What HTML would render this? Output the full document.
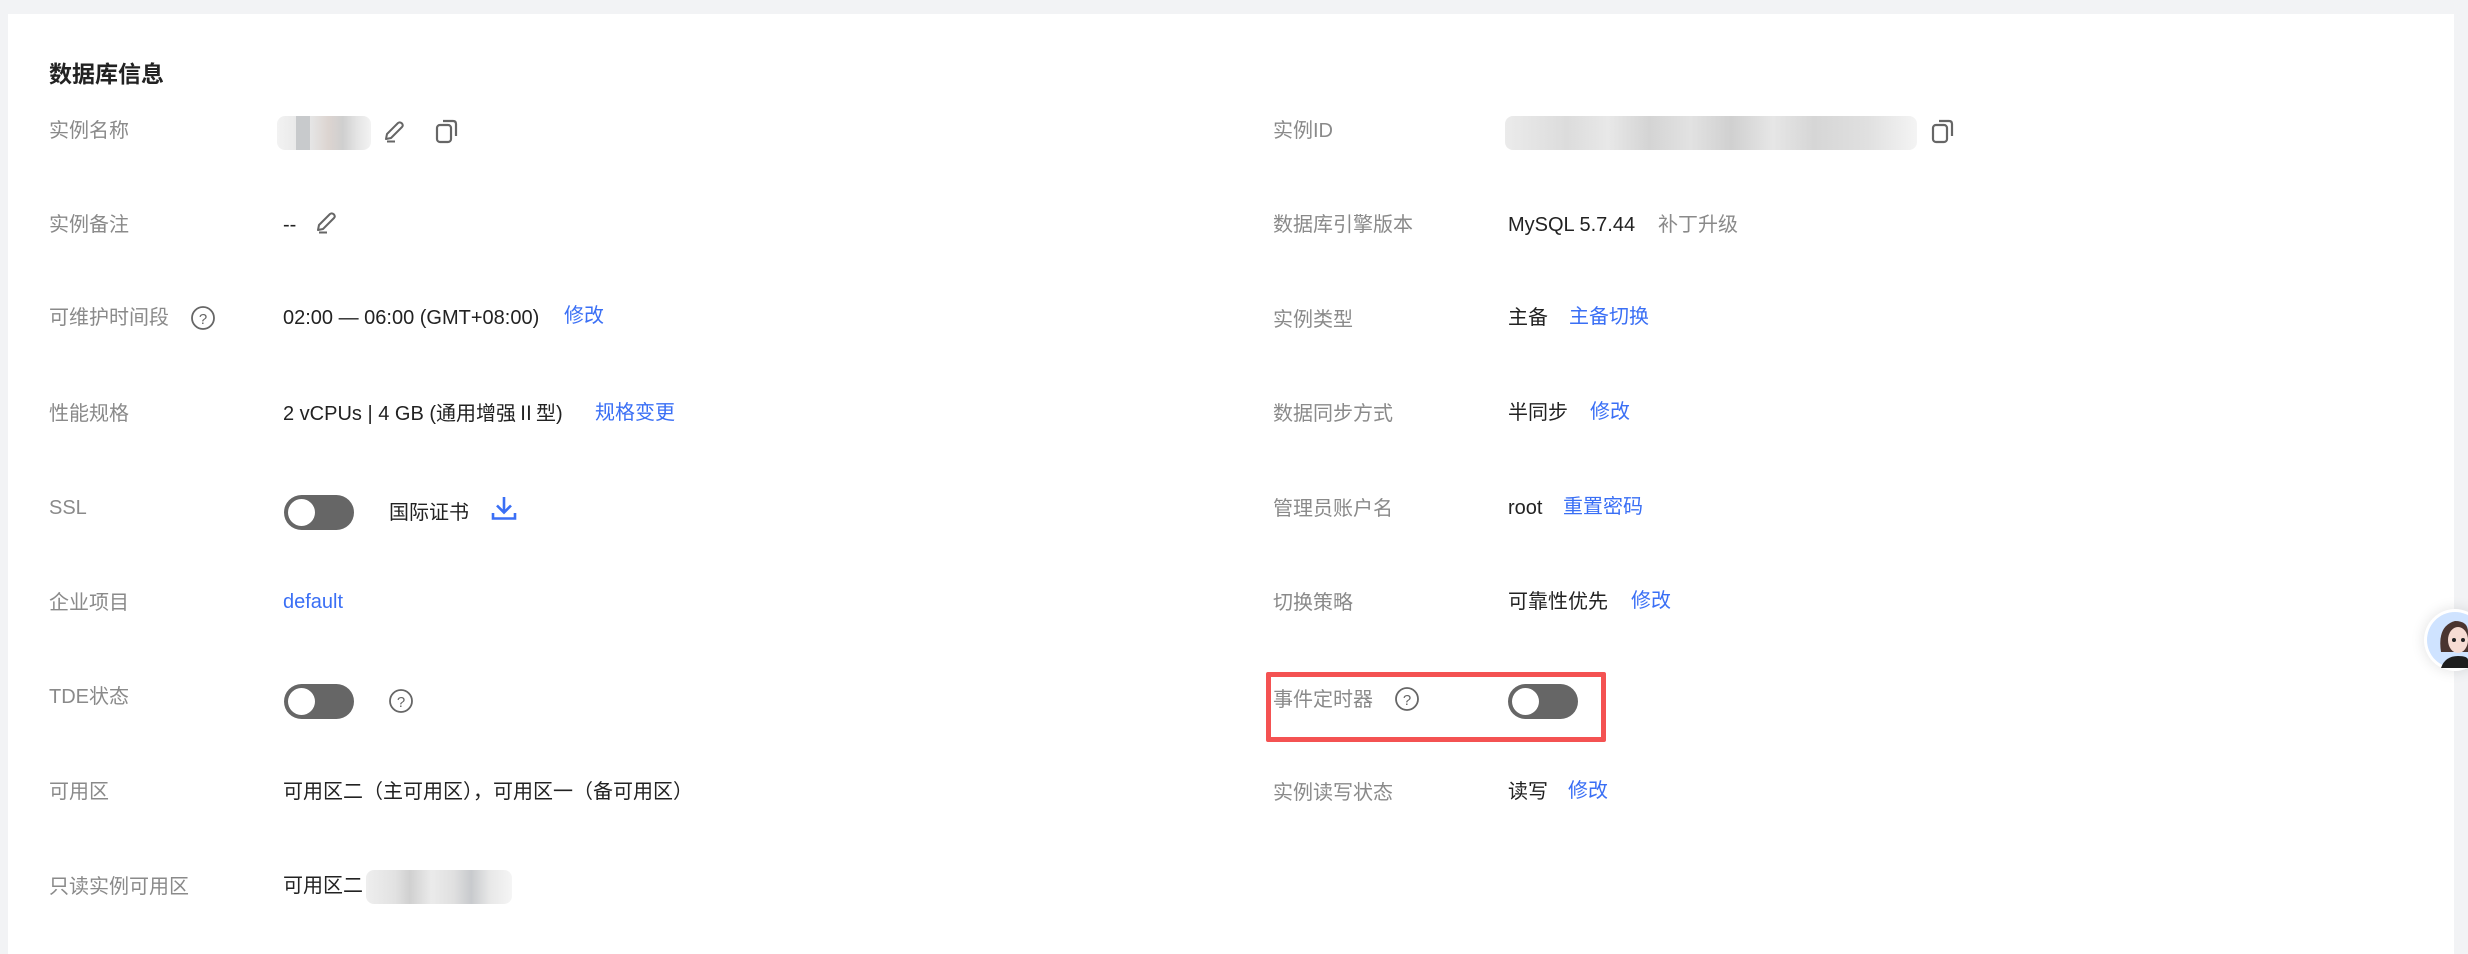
<!DOCTYPE html>
<html><head><meta charset="utf-8">
<style>
html,body{margin:0;padding:0;width:2468px;height:935px;overflow:hidden;background:#f2f3f5;font-family:"Liberation Sans","Noto Sans CJK SC",sans-serif;}
.card{position:absolute;left:8px;top:14px;width:2446px;height:940px;background:#fff;}
.t{position:absolute;white-space:nowrap;font-size:20px;line-height:30px;}
.lab{color:#8a8a8a;}
.val{color:#222;}
.lnk{color:#3a6ff5;}
.grey{color:#8a8a8a;}
.h{position:absolute;left:49px;top:58px;font-size:23px;font-weight:bold;color:#222;line-height:32px;}
.tog{position:absolute;width:70px;height:35px;border-radius:18px;background:#666;}
.tog::after{content:"";position:absolute;left:4px;top:4px;width:27px;height:27px;border-radius:50%;background:#fff;}
.blur{position:absolute;border-radius:8px;}
svg{position:absolute;}
</style></head><body>
<div class="card"></div>
<div class="h">数据库信息</div>

<!-- left column -->
<div class="t lab" style="left:49px;top:116px">实例名称</div>
<div class="blur" style="left:277px;top:116px;width:94px;height:34px;background:linear-gradient(90deg,#f2f2f2 0,#eaeaea 20%,#c8cacc 20%,#c8cacc 35%,#e6e6e6 35%,#dcd4d0 55%,#cfcfcf 70%,#e4e4e4 85%,#f3f3f3 100%);"></div>
<svg style="left:381px;top:119px" width="26" height="26" viewBox="0 0 26 26"><path d="M5 20 L6 15 L17 4 Q19 2.5 21 4.5 Q22.5 6.5 21 8 L10 19 Z M6 22.5 H14" fill="none" stroke="#666" stroke-width="2" stroke-linejoin="round"/></svg>
<svg style="left:434px;top:117px" width="26" height="28" viewBox="0 0 26 28"><rect x="3" y="8" width="14" height="17" rx="3" fill="none" stroke="#666" stroke-width="2.2"/><path d="M9 4 H19 Q22 4 22 7 V19" fill="none" stroke="#666" stroke-width="2.2"/></svg>

<div class="t lab" style="left:49px;top:210px">实例备注</div>
<div class="t val" style="left:283px;top:210px">--</div>
<svg style="left:313px;top:210px" width="26" height="26" viewBox="0 0 26 26"><path d="M5 20 L6 15 L17 4 Q19 2.5 21 4.5 Q22.5 6.5 21 8 L10 19 Z M6 22.5 H14" fill="none" stroke="#666" stroke-width="2" stroke-linejoin="round"/></svg>

<div class="t lab" style="left:49px;top:303px">可维护时间段</div>
<svg style="left:190px;top:305px" width="26" height="26" viewBox="0 0 26 26"><circle cx="13" cy="13" r="11" fill="none" stroke="#666" stroke-width="1.8"/><text x="13" y="19" font-size="15" text-anchor="middle" fill="#666" font-family="Liberation Sans">?</text></svg>
<div class="t val" style="left:283px;top:303px">02:00 — 06:00 (GMT+08:00)</div>
<div class="t lnk" style="left:564px;top:301px">修改</div>

<div class="t lab" style="left:49px;top:399px">性能规格</div>
<div class="t val" style="left:283px;top:399px">2 vCPUs | 4 GB (通用增强Ⅱ型)</div>
<div class="t lnk" style="left:595px;top:398px">规格变更</div>

<div class="t lab" style="left:49px;top:493px">SSL</div>
<div class="tog" style="left:284px;top:495px"></div>
<div class="t val" style="left:389px;top:498px">国际证书</div>
<svg style="left:490px;top:494px" width="28" height="28" viewBox="0 0 28 28"><path d="M14 3 V18 M7 11.5 L14 18.5 L21 11.5 M3 19 V24.5 H25 V19" fill="none" stroke="#3a6ff5" stroke-width="2.6"/></svg>

<div class="t lab" style="left:49px;top:588px">企业项目</div>
<div class="t lnk" style="left:283px;top:587px">default</div>

<div class="t lab" style="left:49px;top:682px">TDE状态</div>
<div class="tog" style="left:284px;top:684px"></div>
<svg style="left:388px;top:688px" width="26" height="26" viewBox="0 0 26 26"><circle cx="13" cy="13" r="11" fill="none" stroke="#666" stroke-width="1.8"/><text x="13" y="19" font-size="15" text-anchor="middle" fill="#666" font-family="Liberation Sans">?</text></svg>

<div class="t lab" style="left:49px;top:777px">可用区</div>
<div class="t val" style="left:283px;top:777px">可用区二（主可用区），可用区一（备可用区）</div>

<div class="t lab" style="left:49px;top:872px">只读实例可用区</div>
<div class="t val" style="left:283px;top:871px">可用区二</div>
<div class="blur" style="left:366px;top:870px;width:146px;height:34px;background:linear-gradient(90deg,#eee 0,#e2e2e2 20%,#d0d0d0 30%,#ebebeb 45%,#e0e0e0 60%,#c8cacd 72%,#e8e8e8 85%,#f5f5f5 100%);"></div>

<!-- right column -->
<div class="t lab" style="left:1273px;top:116px">实例ID</div>
<div class="blur" style="left:1505px;top:116px;width:412px;height:34px;background:linear-gradient(90deg,#ebebeb,#dcdcdc 15%,#e8e8e8 25%,#d4d4d4 35%,#e2e2e2 45%,#d0d0d0 55%,#e6e6e6 65%,#d6d6d6 75%,#e0e0e0 88%,#f4f4f4 100%);"></div>
<svg style="left:1930px;top:117px" width="26" height="28" viewBox="0 0 26 28"><rect x="3" y="8" width="14" height="17" rx="3" fill="none" stroke="#666" stroke-width="2.2"/><path d="M9 4 H19 Q22 4 22 7 V19" fill="none" stroke="#666" stroke-width="2.2"/></svg>

<div class="t lab" style="left:1273px;top:210px">数据库引擎版本</div>
<div class="t val" style="left:1508px;top:210px">MySQL 5.7.44</div>
<div class="t grey" style="left:1658px;top:210px">补丁升级</div>

<div class="t lab" style="left:1273px;top:305px">实例类型</div>
<div class="t val" style="left:1508px;top:303px">主备</div>
<div class="t lnk" style="left:1569px;top:302px">主备切换</div>

<div class="t lab" style="left:1273px;top:399px">数据同步方式</div>
<div class="t val" style="left:1508px;top:398px">半同步</div>
<div class="t lnk" style="left:1590px;top:397px">修改</div>

<div class="t lab" style="left:1273px;top:494px">管理员账户名</div>
<div class="t val" style="left:1508px;top:493px">root</div>
<div class="t lnk" style="left:1563px;top:492px">重置密码</div>

<div class="t lab" style="left:1273px;top:588px">切换策略</div>
<div class="t val" style="left:1508px;top:587px">可靠性优先</div>
<div class="t lnk" style="left:1631px;top:586px">修改</div>

<div style="position:absolute;left:1266px;top:672px;width:330px;height:60px;border:5px solid #f45252;border-radius:2px;"></div>
<div class="t lab" style="left:1273px;top:685px">事件定时器</div>
<svg style="left:1394px;top:686px" width="26" height="26" viewBox="0 0 26 26"><circle cx="13" cy="13" r="11" fill="none" stroke="#666" stroke-width="1.8"/><text x="13" y="19" font-size="15" text-anchor="middle" fill="#666" font-family="Liberation Sans">?</text></svg>
<div class="tog" style="left:1508px;top:684px"></div>

<div class="t lab" style="left:1273px;top:778px">实例读写状态</div>
<div class="t val" style="left:1508px;top:777px">读写</div>
<div class="t lnk" style="left:1568px;top:776px">修改</div>

<!-- avatar -->
<div style="position:absolute;left:2424px;top:609px;width:62px;height:62px;border-radius:50%;background:#fff;box-shadow:0 0 14px rgba(0,0,0,0.12);"></div>
<svg style="left:2427px;top:612px" width="41" height="56" viewBox="0 0 41 56">
<circle cx="28" cy="28" r="28" fill="#cfe3ff"/>
<path d="M14 40 Q10 14 28 9 Q41 9 41 20 V40 Z" fill="#4a3530"/>
<ellipse cx="31" cy="28" rx="10" ry="13" fill="#f6dcd3"/>
<circle cx="27" cy="28" r="2" fill="#222"/><circle cx="36" cy="28" r="2" fill="#222"/>
<path d="M14 56 Q18 44 31 44 Q41 44 41 48 V56 Z" fill="#1e1e1e"/>
</svg>
</body></html>
